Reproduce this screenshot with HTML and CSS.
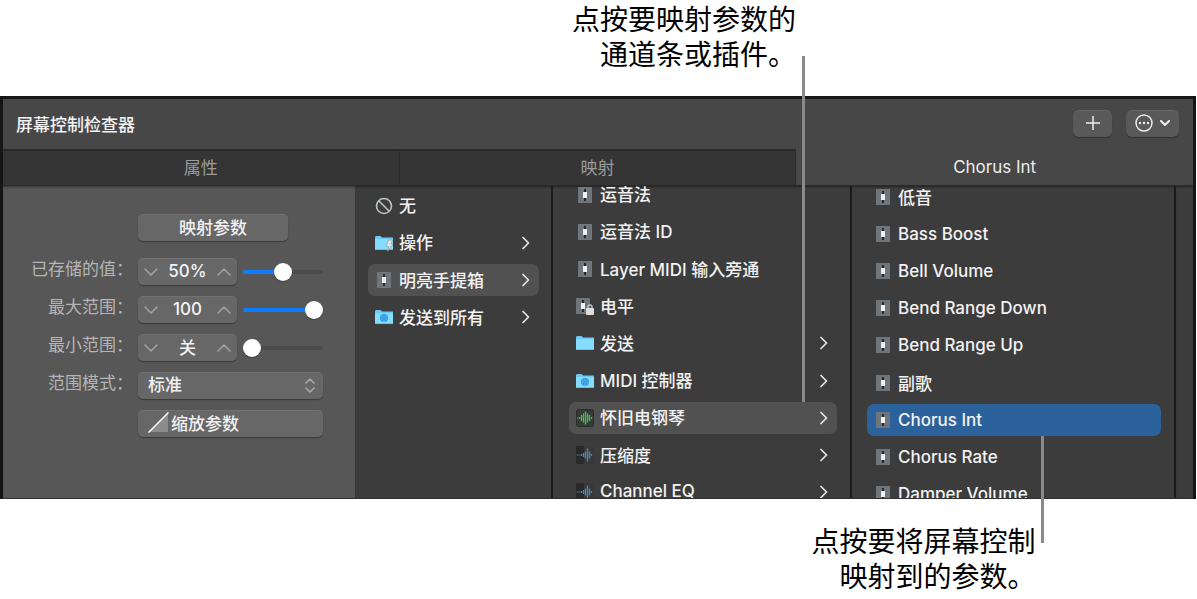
FILE: index.html
```html
<!DOCTYPE html>
<html lang="zh-CN">
    <head>
        <meta charset="utf-8" />
        <title>屏幕控制检查器</title>
        <link rel="stylesheet" href="styles.css">
    </head>

    <body>
        <svg class="sprite" aria-hidden="true">
            <symbol id="fader" viewBox="0 0 18 18">
                <rect x="2" y="1" width="14" height="16" fill="#6e757b" />
                <path d="M9 3v12" stroke="#26282a" stroke-width="2" />
                <rect x="7" y="6" width="4" height="6" fill="#f0f0f0" />
            </symbol>
            <symbol id="fader-lock" viewBox="0 0 18 18">
                <rect x="0" y="1" width="14" height="16" fill="#6e757b" />
                <path d="M7 3v12" stroke="#26282a" stroke-width="2" />
                <rect x="5" y="6" width="4" height="6" fill="#f0f0f0" />
                <path d="M12 12v-2a2 2 0 0 1 4 0v2" fill="none" stroke="#c4c4c4" stroke-width="1.5" />
                <rect x="10" y="11" width="8" height="7" rx="1" fill="#dedede" />
            </symbol>
            <symbol id="folder" viewBox="0 0 18 18">
                <path d="M0 3.5Q0 2 1 2H5.5L7 3.5H18V16H0Z" fill="#6ccbf5" />
                <path d="M0 5H18V16H0Z" fill="#86dcfd" />
                <path d="M0 15.5H18" stroke="#68c3ec" />
            </symbol>
            <symbol id="folder-action" viewBox="0 0 18 18">
                <use href="#folder" />
                <path d="M13.5 6H17.5L16 10H18L12.5 17.5L13.8 12.5H11Z" fill="#e2e2e2" stroke="#7e9aa6" stroke-width=".6" />
            </symbol>
            <symbol id="folder-midi" viewBox="0 0 18 18">
                <use href="#folder" />
                <circle cx="9" cy="10" r="4.2" fill="#3ba1e6" />
                <path d="M6.5 10.5h.1M7.2 8.5h.1M9 7.7h.1M10.8 8.5h.1M11.5 10.5h.1" stroke="#5fb9f0" stroke-width=".8" stroke-linecap="round" />
                <path d="M8.3 14.2v-1.2h1.4v1.2" fill="#6cc6f6" />
            </symbol>
            <symbol id="instrument" viewBox="0 0 18 18">
                <rect x=".5" y=".5" width="17" height="17" rx="2" fill="#343b35" stroke="#2b2b2b" />
                <path d="M1.5 8.5v1M3.5 8v2M5.5 6v6M7.5 4.5v9M9.5 2.5v13M11.5 4.5v9M13.5 6v6M15.5 8v2" stroke="#3fc653" stroke-width="1.3" />
            </symbol>
            <symbol id="effect" viewBox="0 0 18 18">
                <rect width="18" height="18" rx="2" fill="#393939" />
                <path d="M2 0H8V18H2Q0 18 0 16V2Q0 0 2 0" fill="#292929" />
                <path d="M1.5 8.5v1M3.5 8.5v1M5.5 8v2M7.5 7v4M9.5 5.5v7M11.5 2.5v13M13.5 5.5v7M15.5 8v2" stroke="#3d8dc6" stroke-width="1.3" />
            </symbol>
            <symbol id="chevron" viewBox="0 0 8 14">
                <path d="M1 1.5L6.5 7L1 12.5" fill="none" stroke="#e6e6e6" stroke-width="1.7" stroke-linecap="round" stroke-linejoin="round" />
            </symbol>
            <symbol id="down" viewBox="0 0 14 8">
                <path d="M1 1L7 7L13 1" fill="none" stroke="#a0a0a0" stroke-width="1.6" stroke-linecap="round" stroke-linejoin="round" />
            </symbol>
            <symbol id="up" viewBox="0 0 14 8">
                <path d="M1 7L7 1L13 7" fill="none" stroke="#a0a0a0" stroke-width="1.6" stroke-linecap="round" stroke-linejoin="round" />
            </symbol>
        </svg>

        <div class="figure">
            <p class="caption caption-top">点按要映射参数的<br />通道条或插件。</p>

            <div class="inspector">
                <header>
                    <h1>屏幕控制检查器</h1>
                    <button class="tool-button add" aria-label="添加">
                        <svg width="16" height="16" viewBox="0 0 16 16"><path d="M8 1v14M1 8h14" stroke="#eee" stroke-width="1.5" /></svg>
                    </button>
                    <button class="tool-button more" aria-label="更多">
                        <svg width="18" height="18" viewBox="0 0 18 18">
                            <circle cx="9" cy="9" r="8" fill="none" stroke="#eee" stroke-width="1.4" />
                            <circle cx="5" cy="9" r="1.2" fill="#eee" />
                            <circle cx="9" cy="9" r="1.2" fill="#eee" />
                            <circle cx="13" cy="9" r="1.2" fill="#eee" />
                        </svg>
                        <svg width="10" height="6" viewBox="0 0 10 6"><path d="M1 1L5 5L9 1" fill="none" stroke="#eee" stroke-width="2" stroke-linecap="round" /></svg>
                    </button>
                </header>

                <nav class="tabs">
                    <button>属性</button>
                    <button>映射</button>
                    <button class="active">Chorus Int</button>
                </nav>

                <div class="content">
                    <form class="parameters">
                        <button type="button" class="push map">映射参数</button>

                        <label for="saved">已存储的值：</label>
                        <div class="control">
                            <div class="stepper">
                                <button type="button" aria-label="减少"><svg width="14" height="8"><use href="#down" /></svg></button>
                                <input type="text" id="saved" value="50%" />
                                <button type="button" aria-label="增加"><svg width="14" height="8"><use href="#up" /></svg></button>
                            </div>
                            <input type="range" aria-label="已存储的值" value="50" style="--fill: 50%" />
                        </div>

                        <label for="max">最大范围：</label>
                        <div class="control">
                            <div class="stepper">
                                <button type="button" aria-label="减少"><svg width="14" height="8"><use href="#down" /></svg></button>
                                <input type="text" id="max" value="100" />
                                <button type="button" aria-label="增加"><svg width="14" height="8"><use href="#up" /></svg></button>
                            </div>
                            <input type="range" aria-label="最大范围" value="100" style="--fill: 90%" />
                        </div>

                        <label for="min">最小范围：</label>
                        <div class="control">
                            <div class="stepper">
                                <button type="button" aria-label="减少"><svg width="14" height="8"><use href="#down" /></svg></button>
                                <input type="text" id="min" value="关" />
                                <button type="button" aria-label="增加"><svg width="14" height="8"><use href="#up" /></svg></button>
                            </div>
                            <input type="range" aria-label="最小范围" value="0" style="--fill: 0%" />
                        </div>

                        <label for="mode">范围模式：</label>
                        <div class="popup">
                            <select class="push" id="mode">
                                <option>标准</option>
                            </select>
                            <svg width="10" height="15" viewBox="0 0 10 15"><path d="M1 5L5 1L9 5M1 10L5 14L9 10" fill="none" stroke="#a8a8a8" stroke-width="1.6" stroke-linecap="round" stroke-linejoin="round" /></svg>
                        </div>

                        <button type="button" class="push scale">
                            <svg width="21" height="21" viewBox="0 0 21 21"><path d="M1 20L20 1V20Z" fill="#8c8c8c" /><path d="M.5 20.5L20.5 .5" stroke="#fff" stroke-width="1.5" /></svg>
                            缩放参数
                        </button>
                    </form>

                    <div class="column first">
                        <ul>
                            <li><button><svg class="icon" viewBox="0 0 18 18"><g fill="none" stroke="#bcc4c6" stroke-width="1.6"><circle cx="9" cy="9" r="7.5" /><path d="M3.7 3.7L14.3 14.3" /></g></svg><span>无</span></button></li>
                            <li><button><svg class="icon"><use href="#folder-action" /></svg><span>操作</span><svg class="chevron"><use href="#chevron" /></svg></button></li>
                            <li><button class="open"><svg class="icon"><use href="#fader" /></svg><span>明亮手提箱</span><svg class="chevron"><use href="#chevron" /></svg></button></li>
                            <li><button><svg class="icon"><use href="#folder-midi" /></svg><span>发送到所有</span><svg class="chevron"><use href="#chevron" /></svg></button></li>
                        </ul>
                    </div>

                    <div class="column second">
                        <ul>
                            <li><button><svg class="icon"><use href="#fader" /></svg><span>运音法</span></button></li>
                            <li><button><svg class="icon"><use href="#fader" /></svg><span>运音法 ID</span></button></li>
                            <li><button><svg class="icon"><use href="#fader" /></svg><span>Layer MIDI 输入旁通</span></button></li>
                            <li><button><svg class="icon"><use href="#fader-lock" /></svg><span>电平</span></button></li>
                            <li><button><svg class="icon"><use href="#folder" /></svg><span>发送</span><svg class="chevron"><use href="#chevron" /></svg></button></li>
                            <li><button><svg class="icon"><use href="#folder-midi" /></svg><span>MIDI 控制器</span><svg class="chevron"><use href="#chevron" /></svg></button></li>
                            <li><button class="open"><svg class="icon"><use href="#instrument" /></svg><span>怀旧电钢琴</span><svg class="chevron"><use href="#chevron" /></svg></button></li>
                            <li><button><svg class="icon"><use href="#effect" /></svg><span>压缩度</span><svg class="chevron"><use href="#chevron" /></svg></button></li>
                            <li><button><svg class="icon"><use href="#effect" /></svg><span>Channel EQ</span><svg class="chevron"><use href="#chevron" /></svg></button></li>
                        </ul>
                    </div>

                    <div class="column third">
                        <ul>
                            <li><button><svg class="icon"><use href="#fader" /></svg><span>低音</span></button></li>
                            <li><button><svg class="icon"><use href="#fader" /></svg><span>Bass Boost</span></button></li>
                            <li><button><svg class="icon"><use href="#fader" /></svg><span>Bell Volume</span></button></li>
                            <li><button><svg class="icon"><use href="#fader" /></svg><span>Bend Range Down</span></button></li>
                            <li><button><svg class="icon"><use href="#fader" /></svg><span>Bend Range Up</span></button></li>
                            <li><button><svg class="icon"><use href="#fader" /></svg><span>副歌</span></button></li>
                            <li><button class="selected"><svg class="icon"><use href="#fader" /></svg><span>Chorus Int</span></button></li>
                            <li><button><svg class="icon"><use href="#fader" /></svg><span>Chorus Rate</span></button></li>
                            <li><button><svg class="icon"><use href="#fader" /></svg><span>Damper Volume</span></button></li>
                        </ul>
                    </div>
                    <div class="column last"></div>
                </div>
            </div>

            <p class="caption caption-bottom">点按要将屏幕控制<br />映射到的参数。</p>

            <div class="pointer pointer-plugin"></div>
            <div class="pointer pointer-parameter"></div>
        </div>
    </body>
</html>
```
FILE: styles.css
```css
* {
    box-sizing: border-box;
}

body {
    margin: 0;
    background-color: #fff;
    font-family: Inter, "Noto Sans CJK SC", sans-serif;
}

button,
input,
select {
    margin: 0;
    padding: 0;
    border: none;
    background: none;
    font: inherit;
    color: inherit;
}

.sprite {
    display: none;
}

/* captions and pointer lines */

.figure {
    position: relative;
}

.caption {
    margin: 0;
    font-family: "Noto Sans CJK SC", sans-serif;
    font-size: 28px;
    line-height: 35px;
    text-align: right;
    color: #000;
}

.caption-top {
    width: 66.5%;
    padding: 1px 0 25px;
}

.caption-bottom {
    width: 86.5%;
    padding-top: 24px;
}

.pointer {
    position: absolute;
    width: 3px;
    background-color: #8a8a8a;
}

.pointer-plugin {
    left: 67%;
    top: 56px;
    height: 346px;
}

.pointer-parameter {
    left: 87%;
    top: 436px;
    height: 107px;
}

/* inspector window */

.inspector {
    margin-right: 1px;
    border: 3px solid #161616;
    border-bottom: none;
    background-color: #474747;
    color: #f2f2f2;
    font-size: 17px;
    font-weight: 500;
}

header {
    display: flex;
    align-items: center;
    gap: 14px;
    height: 50px;
    padding: 0 14px 2px 13px;
}

h1 {
    flex: 1;
    margin: 0;
    font-size: 17px;
    font-weight: 500;
}

.tool-button {
    display: flex;
    align-items: center;
    justify-content: center;
    gap: 7px;
    height: 27px;
    border-radius: 6px;
    background-color: #595959;
    box-shadow: 0 1px 1px rgba(0, 0, 0, 0.3), inset 0 1px 0 rgba(255, 255, 255, 0.08);
}

.add {
    width: 39px;
}

.more {
    width: 53px;
}

.tabs {
    display: grid;
    grid-template-columns: repeat(3, 1fr);
    height: 37px;
}

.tabs button {
    padding-bottom: 4px;
    border-top: 2px solid #292929;
    border-right: 1px solid #2a2a2a;
    border-bottom: 1px solid #2a2a2a;
    background-color: #353535;
    color: #9b9b9b;
    font-weight: 400;
}

.tabs .active {
    padding-bottom: 2px;
    border-top-color: transparent;
    border-right: none;
    background: none;
    color: #ececec;
}

.content {
    display: grid;
    grid-template-columns: 352fr 198fr 299fr 324fr 17fr;
    height: 313px;
    border-bottom: 1px solid #303030;
}

/* mapping parameters */

.parameters {
    display: grid;
    grid-template-columns: 130px 185px;
    grid-template-rows: 33px;
    grid-auto-rows: 27px;
    align-content: start;
    gap: 11px 5px;
    padding-top: 28px;
    background-color: #575757;
    box-shadow: inset 0 3px 3px -2px rgba(0, 0, 0, 0.4);
}

.parameters label {
    color: #b5b5b5;
    font-weight: 400;
    line-height: 22px;
    text-align: right;
    white-space: nowrap;
}

.push,
.stepper {
    height: 27px;
    border-radius: 5px;
    background-color: #676767;
    box-shadow: 0 1px 1px rgba(0, 0, 0, 0.35), inset 0 1px 0 rgba(255, 255, 255, 0.08);
}

.push {
    padding-bottom: 2px;
}

.map {
    grid-column: 2;
    width: 150px;
}

.scale {
    grid-column: 2;
    display: flex;
    align-items: center;
    gap: 2px;
    padding-left: 10px;
}

.control {
    display: flex;
    gap: 6px;
}

.stepper {
    display: flex;
    width: 99px;
}

.stepper button {
    display: flex;
    align-items: center;
    justify-content: center;
    width: 26px;
}

.stepper input {
    width: 47px;
    padding-bottom: 2px;
    text-align: center;
}

input[type="range"] {
    width: 80px;
    height: 27px;
    appearance: none;
}

input[type="range"]::-webkit-slider-runnable-track {
    height: 4px;
    border-radius: 2px;
    background: linear-gradient(to right, #0d7dff var(--fill), #4c4c4c var(--fill));
}

input[type="range"]::-webkit-slider-thumb {
    width: 18px;
    height: 18px;
    margin-top: -7px;
    border-radius: 50%;
    background-color: #fff;
    box-shadow: 0 1px 1px rgba(0, 0, 0, 0.3);
    appearance: none;
}

.popup {
    position: relative;
}

.popup select {
    width: 100%;
    padding-left: 10px;
    appearance: none;
}

.popup svg {
    position: absolute;
    top: 6px;
    right: 8px;
    pointer-events: none;
}

/* browser columns */

.column {
    overflow: hidden;
    border-right: 2px solid #1c1c1c;
    background-color: #3c3c3c;
    box-shadow: inset 0 2px 2px -1px rgba(0, 0, 0, 0.4);
}

.column ul {
    display: flex;
    flex-direction: column;
    height: 335px;
    margin: 0;
    padding: 0;
    list-style: none;
}

.column li {
    display: flex;
    flex: 1;
    align-items: center;
}

.column button {
    display: flex;
    align-items: center;
    gap: 6px;
    width: 100%;
    height: 32px;
    padding: 0 9px 0 7px;
    border-radius: 7px;
    white-space: nowrap;
}

.column span {
    flex: 1;
    text-align: left;
}

.column .open {
    background-color: #515151;
}

.column .selected {
    background-color: #2b629b;
}

.first {
    padding: 1px 12px 0 13px;
}

.first ul {
    height: 149px;
}

.first span,
.second span {
    padding-bottom: 2px;
}

.second {
    padding: 0 13px 0 16px;
}

.second ul {
    margin-top: -10px;
}

.third {
    padding: 0 13px 0 15px;
}

.third ul {
    margin-top: -8px;
}

.last {
    border-right: none;
}

.icon {
    width: 18px;
    height: 18px;
}

.chevron {
    width: 8px;
    height: 14px;
}
```
